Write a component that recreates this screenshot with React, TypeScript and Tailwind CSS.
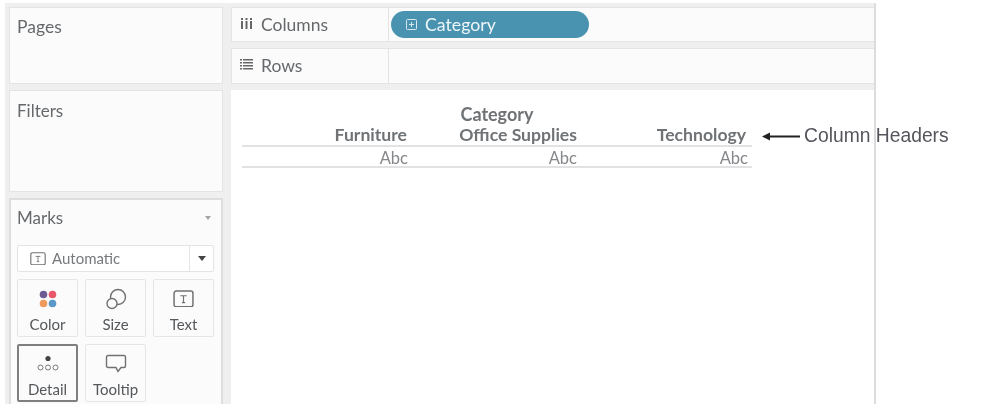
import React from "react";

const ui = "font-['Lato','Open_Sans',sans-serif]";

function Card({ label, children, active }: { label: string; children: React.ReactNode; active?: boolean }) {
  return (
    <div className={`w-[61px] h-[58px] flex flex-col items-center bg-[#fbfbfb] rounded-[2px] border ${active ? "border-[#7f7f7f] border-2" : "border-[#e6e6e6]"}`}>
      <div className={`h-[35px] flex items-center justify-center ${active ? "" : "mt-[1px]"}`}>{children}</div>
      <span className="text-[15px] leading-[17px] text-[#55585b]">{label}</span>
    </div>
  );
}

function TextGlyph({ size = 20 }: { size?: number }) {
  return (
    <svg width={size} height={size * 0.85} viewBox="0 0 20 17" fill="none" stroke="#6f7173">
      <rect x="1" y="1" width="18" height="15" rx="2" strokeWidth="1.4" />
      <path d="M7 5.5h6M10 5.5v6.5M8.5 12h3" strokeWidth="1.1" />
    </svg>
  );
}

export default function App() {
  return (
    <div className={`relative w-[990px] h-[414px] bg-white overflow-hidden ${ui} blur-[0.6px]`}>
      <div className="w-[871px] h-[401px] mt-[3px] ml-[5px] pl-[4px] pt-[4px] bg-[#efefef] border-r-2 border-[#dcdcdc] flex gap-[8px]">
        <div className="w-[214px] flex flex-col gap-[6px] shrink-0">
          <section className="h-[77px] bg-[#fbfbfb] border border-[#e4e4e4] pl-[7px] pt-[9px] text-[17.5px] leading-[20px] text-[#66696c]">Pages</section>
          <section className="h-[102px] bg-[#fbfbfb] border border-[#e4e4e4] pl-[7px] pt-[10px] text-[17px] leading-[20px] text-[#66696c]">Filters</section>
          <section className="flex-1 bg-[#fbfbfb] border-2 border-[#dedede] border-b-0 pl-[6px] pr-[7px] pt-[7px]">
            <div className="flex items-center justify-between h-[22px] text-[17px] text-[#66696c]">
              <span>Marks</span>
              <svg width="6" height="4" viewBox="0 0 6 4" className="mr-[3px]"><path d="M0 0h6L3 4z" fill="#a5a5a5" /></svg>
            </div>
            <div className="mt-[16px] h-[27px] flex items-center bg-white border border-[#e4e4e4] rounded-[2px] text-[15px] text-[#777a7d]">
              <div className="flex-1 flex items-center gap-[6px] pl-[12px]">
                <TextGlyph size={16} />
                <span>Automatic</span>
              </div>
              <div className="w-[24px] h-full border-l border-[#e4e4e4] flex items-center justify-center">
                <svg width="8" height="5" viewBox="0 0 8 5"><path d="M0 0h8L4 5z" fill="#444" /></svg>
              </div>
            </div>
            <div className="mt-[7px] grid grid-cols-[repeat(3,61px)] gap-x-[7px] gap-y-[7px]">
              <Card label="Color">
                <svg width="18" height="18" viewBox="0 0 18 18">
                  <circle cx="4.5" cy="4.5" r="3.8" fill="#6d5b94" />
                  <circle cx="13.5" cy="4.5" r="3.8" fill="#e8586a" />
                  <circle cx="4.5" cy="13.5" r="3.8" fill="#ef9a5c" />
                  <circle cx="13.5" cy="13.5" r="3.8" fill="#5b97c9" />
                </svg>
              </Card>
              <Card label="Size">
                <svg width="22" height="22" viewBox="0 0 22 22" fill="none" stroke="#6f7173" strokeWidth="1.4">
                  <circle cx="13" cy="9" r="7.5" />
                  <circle cx="7" cy="15.5" r="5" fill="#fbfbfb" />
                </svg>
              </Card>
              <Card label="Text"><TextGlyph size={21} /></Card>
              <Card label="Detail" active>
                <svg width="24" height="20" viewBox="0 0 24 20" fill="none" stroke="#77797b" strokeWidth="1">
                  <circle cx="12" cy="4.5" r="2.6" fill="#444" stroke="none" />
                  <circle cx="4.5" cy="13.5" r="2.5" />
                  <circle cx="12" cy="13.5" r="2.5" />
                  <circle cx="19.5" cy="13.5" r="2.5" />
                </svg>
              </Card>
              <Card label="Tooltip">
                <svg width="22" height="20" viewBox="0 0 22 20" fill="none" stroke="#6f7173" strokeWidth="1.4">
                  <path d="M3 1.5h16a1.5 1.5 0 0 1 1.5 1.5v9a1.5 1.5 0 0 1-1.5 1.5h-3l-3 4-2-4H3A1.5 1.5 0 0 1 1.5 12V3A1.5 1.5 0 0 1 3 1.5z" />
                </svg>
              </Card>
            </div>
          </section>
        </div>
        <div className="flex-1 flex flex-col gap-[6px] min-w-0">
          <div className="h-[35px] bg-[#fbfbfb] border-y border-l border-[#e4e4e4] flex items-center">
            <div className="w-[157px] h-full border-r border-[#e4e4e4] flex items-center gap-[9px] pl-[9px] pt-[1px] text-[17.5px] text-[#66696c]">
              <svg width="11" height="11" viewBox="0 0 11 11" fill="#666" className="-mt-[4px]"><path d="M0 0h2v2H0zM0 3h2v8H0zM4.5 0h2v2h-2zM4.5 3h2v8h-2zM9 0h2v2H9zM9 3h2v8H9z" /></svg>
              <span>Columns</span>
            </div>
            <div className="ml-[2px] w-[198px] h-[27px] rounded-full bg-[#4a93b0] flex items-center pl-[15px] gap-[8px] pt-[1px] text-[17.7px] text-[#eef6f9]">
              <svg width="11" height="11" viewBox="0 0 11 11" fill="none" stroke="#d8e8ee" className="-mt-[1px]"><rect x=".5" y=".5" width="10" height="10" rx="1" /><path d="M3 5.5h5M5.5 3v5" /></svg>
              <span>Category</span>
            </div>
          </div>
          <div className="h-[36px] bg-[#fbfbfb] border-y border-l border-[#e4e4e4] flex items-center">
            <div className="w-[157px] h-full border-r border-[#e4e4e4] flex items-center gap-[8px] pl-[8px] pt-[1px] text-[17.5px] text-[#66696c]">
              <svg width="13" height="11" viewBox="0 0 13 11" fill="#666" className="-mt-[4px]"><path d="M0 0h2v1.6H0zM3 0h10v1.6H3zM0 3h2v1.6H0zM3 3h10v1.6H3zM0 6h2v1.6H0zM3 6h10v1.6H3zM0 9h2v1.6H0zM3 9h10v1.6H3z" /></svg>
              <span>Rows</span>
            </div>
          </div>
          <div className="flex-1 bg-white pl-[11px] pt-[14px] text-[#707376]">
            <div className="w-[510px] text-[17.6px]">
              <div className="text-center leading-[20px] font-bold text-[18px]">Category</div>
              <div className="grid grid-cols-[166px_170px_174px] h-[23px] leading-[22px] border-b-2 border-[#e2e2e2] font-bold text-right">
                <span className="pr-[1px]">Furniture</span>
                <span className="pr-[1px]">Office Supplies</span>
                <span className="pr-[6px]">Technology</span>
              </div>
              <div className="grid grid-cols-[166px_170px_174px] h-[21px] leading-[22px] border-b-2 border-[#e2e2e2] text-right text-[16.5px] text-[#85878a]">
                <span>Abc</span>
                <span className="pr-[1px]">Abc</span>
                <span className="pr-[4px]">Abc</span>
              </div>
            </div>
          </div>
        </div>
      </div>
      <div className="absolute left-[762px] top-[125px] flex items-center font-['Liberation_Sans',sans-serif] text-[19.3px] leading-[22px] text-[#55555c]">
        <svg width="38" height="9" viewBox="0 0 38 9"><path d="M0 4.5l8-4v3h30v2H8v3z" fill="#222" /></svg>
        <span className="ml-[4px]">Column Headers</span>
      </div>
    </div>
  );
}
